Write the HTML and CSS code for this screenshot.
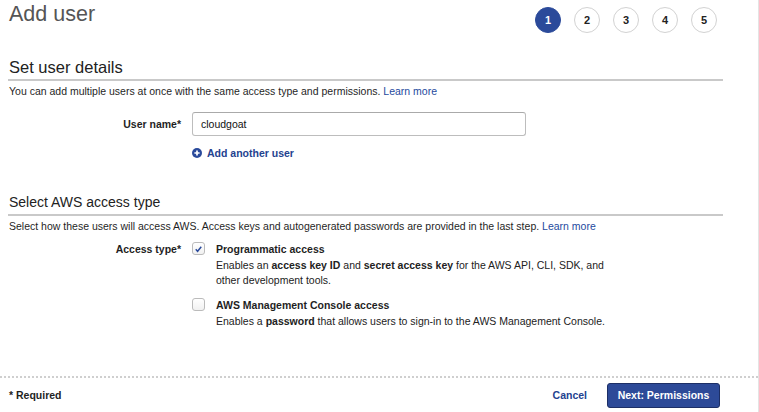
FILE: index.html
```html
<!DOCTYPE html>
<html>
<head>
<meta charset="utf-8">
<link rel="stylesheet" href="styles.css">
</head>
<body>
<div class="page">
  <main class="main">
    <header class="top">
      <h1 class="title">Add user</h1>
      <ol class="steps">
        <li class="step active">1</li>
        <li class="step">2</li>
        <li class="step">3</li>
        <li class="step">4</li>
        <li class="step">5</li>
      </ol>
    </header>

    <section class="section s1">
      <h2 class="heading">Set user details</h2>
      <p class="desc">You can add multiple users at once with the same access type and permissions. <a class="link">Learn more</a></p>
      <div class="row user-row">
        <label class="label">User name*</label>
        <div class="field">
          <div class="input">cloudgoat</div>
          <a class="add"><svg class="plus" viewBox="0 0 10 10" width="10" height="10"><circle cx="5" cy="5" r="5" fill="#2a4a9b"/><path d="M5 2.4v5.2M2.4 5h5.2" stroke="#fff" stroke-width="1.7"/></svg>Add another user</a>
        </div>
      </div>
    </section>

    <section class="section s2">
      <h2 class="heading small">Select AWS access type</h2>
      <p class="desc">Select how these users will access AWS. Access keys and autogenerated passwords are provided in the last step. <a class="link">Learn more</a></p>
      <div class="row access-row">
        <label class="label">Access type*</label>
        <div class="options">
          <div class="option">
            <span class="check"><svg viewBox="0 0 12 12" width="12" height="12"><path d="M3 6.4l2 2.1 4-5" fill="none" stroke="#2a4a9b" stroke-width="1.6"/></svg></span>
            <div class="opt-text">
              <div class="opt-title">Programmatic access</div>
              <div class="opt-desc">Enables an <b>access key ID</b> and <b>secret access key</b> for the AWS API, CLI, SDK, and other development tools.</div>
            </div>
          </div>
          <div class="option">
            <span class="check"></span>
            <div class="opt-text">
              <div class="opt-title">AWS Management Console access</div>
              <div class="opt-desc">Enables a <b>password</b> that allows users to sign-in to the AWS Management Console.</div>
            </div>
          </div>
        </div>
      </div>
    </section>
  </main>

  <footer class="footer">
    <span class="req">* Required</span>
    <div class="actions">
      <a class="cancel">Cancel</a>
      <button class="next">Next: Permissions</button>
    </div>
  </footer>
</div>
</body>
</html>
```

FILE: styles.css
```css
* { box-sizing: border-box; }
html, body { margin: 0; padding: 0; background: #fff; }
body {
  font-family: "Liberation Sans", Arial, sans-serif;
  font-size: 10.5px;
  color: #1f1f1f;
  width: 759px;
  height: 412px;
  overflow: hidden;
}
.page {
  height: 412px;
  display: flex;
  flex-direction: column;
  border-right: 1px solid #e4e4e4;
  width: 759px;
}
.main { flex: 1; padding: 0 35px 0 8px; }
.top {
  display: flex;
  justify-content: space-between;
  align-items: flex-start;
  height: 50px;
}
.title {
  margin: 1px 0 0 1px;
  font-size: 21.5px;
  font-weight: normal;
  color: #555;
  line-height: 26px;
}
.steps {
  list-style: none;
  margin: 7px 6px 0 0;
  padding: 0;
  display: flex;
  gap: 13px;
}
.step {
  width: 26px;
  height: 26px;
  border-radius: 50%;
  border: 1px solid #d2d2d2;
  display: flex;
  align-items: center;
  justify-content: center;
  font-weight: bold;
  font-size: 11px;
  color: #222;
}
.step.active { background: #2b4a9a; border-color: #2b4a9a; color: #fff; }
.heading {
  margin: 0;
  font-size: 16.5px;
  font-weight: normal;
  color: #222;
  line-height: 20px;
  padding: 0 0 2px 1px;
  border-bottom: 2px solid #c9c9c9;
}
.heading.small {
  font-size: 14px;
  line-height: 17px;
  padding-bottom: 3px;
}
.s1 { margin-top: 7px; }
.desc { margin: 3px 0 0 1px; line-height: 14px; }
.link { color: #1e4a9e; }
.row { display: flex; }
.label {
  width: 184px;
  text-align: right;
  font-weight: bold;
  padding-right: 11px;
  flex: none;
}
.user-row { margin-top: 14px; }
.user-row .label { line-height: 24px; }
.field { display: flex; flex-direction: column; }
.input {
  width: 334px;
  height: 24px;
  border: 1px solid #bdbdbd;
  border-top-color: #aaa;
  border-radius: 3px;
  padding: 0 8px;
  line-height: 22px;
  font-size: 10.5px;
  color: #111;
}
.add {
  margin-top: 10px;
  color: #24428f;
  font-weight: bold;
  display: flex;
  align-items: center;
  gap: 5px;
  line-height: 14px;
}
.plus { flex: none; }
.s2 { margin-top: 34px; }
.access-row { margin-top: 9px; }
.access-row .label { line-height: 14px; }
.options { display: flex; flex-direction: column; gap: 10px; }
.option { display: flex; gap: 11px; }
.check {
  width: 13px;
  height: 13px;
  border: 1px solid #bbb;
  border-radius: 3px;
  background: linear-gradient(#fff, #f1f1f1);
  margin-top: 0;
  flex: none;
  display: flex;
  align-items: center;
  justify-content: center;
}
.check svg { display: block; }
.opt-text { width: 400px; }
.opt-title { font-weight: bold; line-height: 14px; margin-bottom: 2px; }
.opt-desc { color: #222; line-height: 15px; }
.opt-desc b { font-weight: bold; }
.footer {
  height: 36px;
  border-top: 2px dotted #cfcfcf;
  display: flex;
  align-items: center;
  justify-content: space-between;
  padding: 0 38px 0 9px;
}
.req { font-weight: bold; }
.actions { display: flex; align-items: center; gap: 20px; }
.cancel { color: #24428f; font-weight: bold; }
.next {
  font-family: "Liberation Sans", Arial, sans-serif;
  font-size: 10.5px;
  font-weight: bold;
  color: #fff;
  background: #2d4a98;
  border: 1px solid #1d2f66;
  border-radius: 3px;
  height: 25px;
  width: 113px;
  padding: 0;
}
```
